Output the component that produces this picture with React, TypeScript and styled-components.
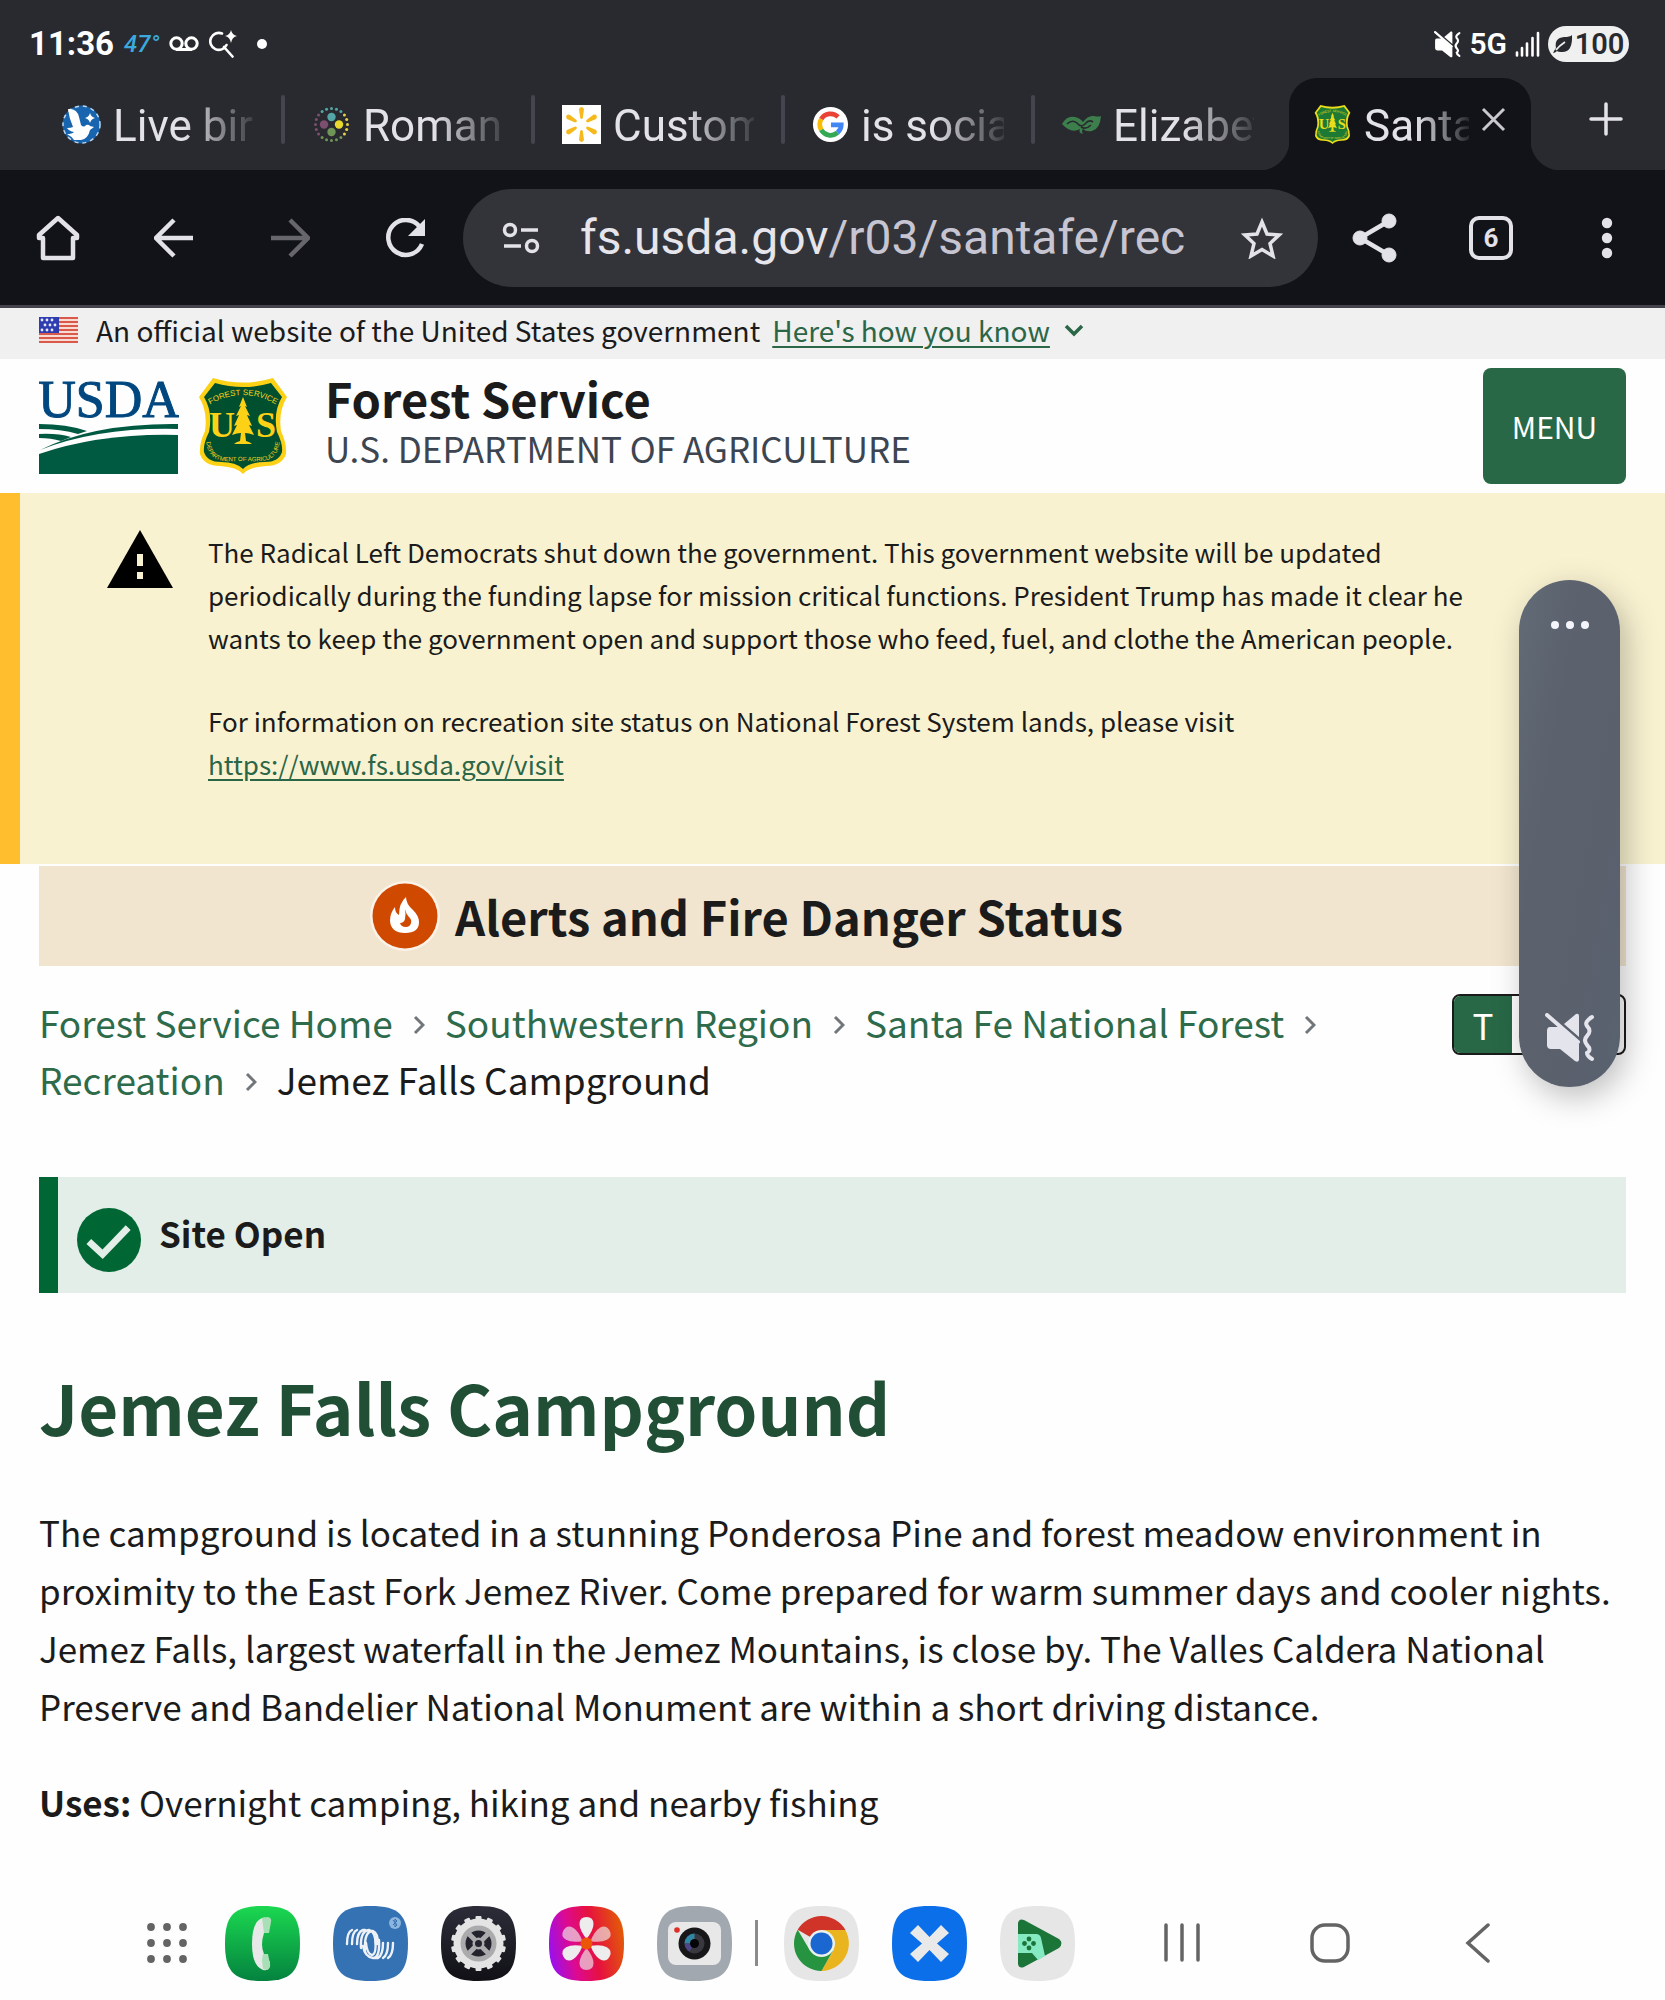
import React from "react";
import styled, { createGlobalStyle, css } from "styled-components";

const site = `"Noto Sans CJK JP", "Noto Sans", sans-serif`;
const system = `Roboto, "Liberation Sans", sans-serif`;

const ink = "#1b1b1b";
const forest = "#286846";
const darkBar = "#121318";
const strip = "#292a2f";
const light = "#e3e2e9";

const GlobalStyle = createGlobalStyle`
  *, *::before, *::after { box-sizing: border-box; }
  body { margin: 0; background: #fefefe; color: ${ink}; font-family: ${site}; }
  h1, h2, p, ol { margin: 0; padding: 0; }
  button { border: 0; padding: 0; background: none; color: inherit; font: inherit; cursor: pointer; }
  svg { display: block; flex: none; }
`;

const Screen = styled.div`
  position: relative;
  display: flex;
  flex-direction: column;
  min-height: 100vh;
`;

/* ---------- phone status bar ---------- */

const StatusBar = styled.div`
  display: flex;
  align-items: center;
  justify-content: space-between;
  height: 78px;
  padding: 10px 36px 0 29px;
  background: ${strip};
  color: #fff;
  font-family: ${system};
`;

const StatusGroup = styled.div<{ $gap: number }>`
  display: flex;
  align-items: center;
  gap: ${(p) => p.$gap}px;
`;

const Clock = styled.time`
  font-size: 33px;
  font-weight: 700;
  line-height: 40px;
`;

const Temperature = styled.span`
  color: #3ba9dd;
  font-size: 24px;
  font-weight: 500;
  font-style: italic;
  line-height: 40px;
`;

const Network = styled.span`
  font-size: 30px;
  font-weight: 600;
  line-height: 40px;
`;

const Dot = styled.span`
  width: 10px;
  height: 10px;
  margin-left: 10px;
  border-radius: 50%;
  background: #fff;
`;

const Battery = styled.span`
  display: flex;
  align-items: center;
  justify-content: center;
  gap: 2px;
  width: 81px;
  height: 36px;
  border-radius: 18px;
  background: #f0f0f0;
  color: #292a2f;
  font-size: 29px;
  font-weight: 600;
`;

/* ---------- browser tabs ---------- */

const TabStrip = styled.nav`
  display: flex;
  height: 92px;
  padding-left: 33px;
  background: ${strip};
  font-family: ${system};
`;

const Tab = styled.button<{ $active?: boolean; $divider?: boolean }>`
  position: relative;
  display: flex;
  align-items: center;
  gap: 12px;
  flex: none;
  width: 250px;
  height: 92px;
  padding: 0 29px 0 29px;
  color: ${light};
  text-align: left;

  ${(p) =>
    p.$divider &&
    css`
      &::after {
        content: "";
        position: absolute;
        top: 17px;
        right: -2px;
        width: 4px;
        height: 49px;
        border-radius: 2px;
        background: #45454f;
      }
    `}

  ${(p) =>
    p.$active &&
    css`
      width: 242px;
      margin-left: 6px;
      padding: 0 25px 0 24px;
      border-radius: 28px 28px 0 0;
      background: ${darkBar};

      &::before,
      &::after {
        content: "";
        position: absolute;
        bottom: 0;
        width: 30px;
        height: 30px;
      }
      &::before {
        left: -30px;
        background: radial-gradient(circle at 0 0, transparent 30px, ${darkBar} 31px);
      }
      &::after {
        right: -30px;
        background: radial-gradient(circle at 100% 0, transparent 30px, ${darkBar} 31px);
      }
    `}
`;

const TabTitle = styled.span`
  flex: 1;
  min-width: 0;
  overflow: hidden;
  font-size: 44px;
  line-height: 60px;
  padding-top: 3px;
  white-space: nowrap;
  mask-image: linear-gradient(to right, #000 50%, rgba(0, 0, 0, 0.1) 100%);
`;

const TabAction = styled.button`
  display: grid;
  place-items: center;
  flex: none;
  margin: 0 0 10px;
  color: ${light};
`;

const NewTab = styled(TabAction)`
  width: 60px;
  margin-left: auto;
  margin-right: 29px;
`;

/* ---------- browser toolbar ---------- */

const Toolbar = styled.div`
  display: flex;
  align-items: center;
  justify-content: space-between;
  gap: 33px;
  height: 138px;
  padding: 0 34px;
  border-bottom: 3px solid #44434b;
  background: ${darkBar};
  color: ${light};
  font-family: ${system};
`;

const IconGroup = styled.div<{ $gap: number }>`
  display: flex;
  align-items: center;
  gap: ${(p) => p.$gap}px;
`;

const IconButton = styled.button<{ $dim?: boolean }>`
  display: grid;
  place-items: center;
  width: 48px;
  height: 60px;
  opacity: ${(p) => (p.$dim ? 0.4 : 1)};
`;

const Omnibox = styled.div`
  display: flex;
  align-items: center;
  flex: 1;
  min-width: 0;
  gap: 40px;
  height: 98px;
  padding: 0 32px 0 39px;
  border-radius: 49px;
  background: #33343a;
`;

const Address = styled.button`
  flex: 1;
  min-width: 0;
  overflow: hidden;
  margin-right: 14px;
  color: #c6c5d1;
  font-size: 48px;
  line-height: 64px;
  text-align: left;
  white-space: nowrap;

  b {
    color: #e6e5ec;
    font-weight: 400;
  }
`;

/* ---------- site header ---------- */

const GovBanner = styled.div`
  display: flex;
  align-items: center;
  padding: 3px 39px 10px;
  background: #f0f0f0;
  font-size: 28px;
  line-height: 38px;
`;

const BannerText = styled.span`
  margin: 0 12px 0 18px;
`;

const TextLink = styled.a`
  color: #2b6647;
  text-decoration: underline;
  text-decoration-thickness: 2px;
  text-underline-offset: 4px;
`;

const BannerToggle = styled.button`
  display: flex;
  align-items: center;
  gap: 14px;
  color: #2b6647;

  span {
    text-decoration: underline;
    text-decoration-thickness: 2px;
    text-underline-offset: 4px;
  }
`;

const Header = styled.header`
  display: flex;
  align-items: center;
  min-height: 134px;
  padding: 0 39px;
`;

const Brand = styled.div`
  display: flex;
  align-items: center;
  gap: 20px;
  flex: 1;
`;

const BrandText = styled.div`
  padding: 0 0 6px 18px;
`;

const Agency = styled.div`
  font-size: 47px;
  font-weight: 700;
  line-height: 50px;
`;

const Department = styled.div`
  color: #3d4551;
  font-size: 35px;
  line-height: 50px;
`;

const MenuButton = styled.button`
  width: 143px;
  height: 116px;
  border-radius: 8px;
  background: ${forest};
  color: #fff;
  font-size: 30px;
`;

/* ---------- page body ---------- */

const Notice = styled.section`
  display: flex;
  gap: 35px;
  padding: 37px 160px 79px 87px;
  border-left: 20px solid #ffbe2e;
  background: #f9f2d1;
  font-size: 26px;
  line-height: 43px;

  p + p {
    margin-top: 40px;
  }
`;

const Main = styled.main`
  padding: 2px 39px 0;
`;

const FireStatus = styled.section`
  display: flex;
  align-items: center;
  justify-content: center;
  gap: 15px;
  height: 100px;
  padding-right: 172px;
  background: #f1e5cf;

  h2 {
    font-size: 47px;
    line-height: 60px;
  }
`;

const CrumbRow = styled.div`
  display: flex;
  align-items: flex-start;
  justify-content: space-between;
  margin-top: 28px;
`;

const Crumbs = styled.ol`
  display: flex;
  flex-wrap: wrap;
  flex: 1;
  max-width: 1320px;
  list-style: none;
  font-size: 37px;
  line-height: 57px;

  li {
    display: flex;
    align-items: center;
  }
  a {
    color: #2e6b4b;
    text-decoration: none;
  }
  svg {
    margin: 4px 20px 0 20px;
  }
`;

const Translate = styled.div`
  display: flex;
  width: 174px;
  height: 61px;
  overflow: hidden;
  border: 2px solid ${ink};
  border-radius: 8px;
`;

const TranslateButton = styled.button`
  width: 58px;
  background: ${forest};
  color: #fff;
  font-size: 35px;
  line-height: 54px;
`;

const SiteStatus = styled.section`
  display: flex;
  gap: 18px;
  margin-top: 69px;
  padding: 31px 20px 21px 19px;
  border-left: 19px solid #006633;
  background: #e3eee8;
  font-size: 35px;
  font-weight: 700;
  line-height: 50px;
`;

const Title = styled.h1`
  margin-top: 68px;
  color: #214f36;
  font-size: 69px;
  font-weight: 700;
  line-height: 90px;
`;

const Copy = styled.div`
  margin-top: 52px;
  font-size: 35px;
  line-height: 58px;

  p + p {
    margin-top: 38px;
  }
`;

/* ---------- floating volume panel ---------- */

const VolumePanel = styled.aside`
  position: absolute;
  top: 580px;
  right: 45px;
  display: flex;
  flex-direction: column;
  align-items: center;
  justify-content: space-between;
  width: 101px;
  height: 507px;
  padding: 34px 0 24px;
  border-radius: 51px;
  background: linear-gradient(100deg, #616b76 0%, #5b616d 35%, #5b606d 70%, #58626f 100%);
  box-shadow: 6px 10px 32px rgba(0, 0, 0, 0.26);
  color: #e3e4ec;
`;

/* ---------- dock ---------- */

const Dock = styled.footer`
  display: flex;
  align-items: center;
  justify-content: space-between;
  height: 114px;
  margin-top: auto;
  padding: 0 169px 0 147px;
`;

const DockApps = styled.div`
  display: flex;
  align-items: center;
  gap: 33px;
`;

const DockButton = styled.button`
  display: block;
`;

const Divider = styled.span`
  width: 3px;
  height: 46px;
  margin: 0 -7px 0 -10px;
  background: #8b8b8b;
`;

const NavKeys = styled.div`
  display: flex;
  align-items: center;
  gap: 110px;
`;

/* ---------- drawings ---------- */

const MuteIcon = ({ size }: { size: number }) => (
  <svg width={size} height={size} viewBox="0 0 50 50" fill="currentColor">
    <path d="M5 14H14L34 31V47q-1 3-4 1L15 36H6q-4 0-4-4V18q0-4 3-4z" />
    <path d="M19 11 31 1q3-1 3 2v21z" />
    <path d="M2 2 33 29" stroke="currentColor" strokeWidth="4" strokeLinecap="round" />
    <path d="M47 4q-8 5-5 9 5 5 0 10-4 4 0 9 5 5 0 8 0 3 5 6" fill="none" stroke="currentColor" strokeWidth="4" strokeLinecap="round" />
  </svg>
);

const VoicemailIcon = () => (
  <svg width="30" height="16" viewBox="0 0 30 16" fill="none" stroke="#fff" strokeWidth="3">
    <circle cx="7.500" cy="7.500" r="5.700" />
    <circle cx="22.500" cy="7.500" r="5.700" />
    <path d="M7 13.500h16" />
  </svg>
);

const SparkSearchIcon = () => (
  <svg width="28" height="28" viewBox="0 0 28 28" fill="none" stroke="#fff" strokeWidth="2.600">
    <path d="M13 3.500A8.500 8.500 0 1 0 17.500 15M15 17l8.500 9.500" strokeLinecap="round" />
    <path d="M22 0q1 5 6 6-5 1-6 7-1-6-6-7 5-1 6-6z" fill="#fff" stroke="none" />
  </svg>
);

const SignalIcon = () => (
  <svg width="25" height="26" viewBox="0 0 25 26" stroke="#fff" strokeWidth="2.600" strokeLinecap="round">
    <path d="M2 21.500v3M7 17v7.500M12 12.500v12M17.500 7v17.500M23 2v22.500" />
  </svg>
);

const LeafIcon = () => (
  <svg width="20" height="20" viewBox="0 0 20 20">
    <path d="M19 1Q20 19 8 18q-3 0-4-1-2 2-4 2 2-4 3-5Q1 4 11 3q6 0 8-2z" fill="#292a2f" />
    <path d="M3 16q3-4 9-8" stroke="#f0f0f0" strokeWidth="1.800" fill="none" />
  </svg>
);

const BirdIcon = () => (
  <svg width="39" height="39" viewBox="0 0 39 39">
    <circle cx="19.500" cy="19.500" r="19" fill="#1864ae" />
    <circle cx="19.500" cy="19.500" r="18.500" fill="none" stroke="#bcd6ee" strokeWidth="1.500" strokeDasharray="4 4" />
    <path d="M6 4q9-1 11 8l2 8q3 3 5 0 3-1 4 1l4 1-4 3q-2 9-9 10h-7q-3-4-7-6 5 0 7-2-5-1-7-4 4 0 6-1-4-9-5-18z" fill="#fff" />
    <path d="M28 8q1 4 5 5-4 1-5 5-1-4-5-5 4-1 5-5z" fill="#fff" />
  </svg>
);

const DotsIcon = () => (
  <svg width="39" height="39" viewBox="0 0 39 39">
    {Array.from({ length: 20 }, (_, i) => {
      const a = (i / 20) * Math.PI * 2 - Math.PI / 2;
      const color = i < 3 ? "#54a5a8" : i < 8 ? "#e4d246" : i < 13 ? "#6f9457" : i < 18 ? "#7c4e70" : "#54a5a8";
      return <circle key={i} cx={19.5 + 16 * Math.cos(a)} cy={19.5 + 16 * Math.sin(a)} r="1.500" fill={color} />;
    })}
    <circle cx="19.500" cy="12" r="4.200" fill="#54a5a8" />
    <circle cx="27" cy="19.500" r="4.200" fill="#e9d82e" />
    <circle cx="19.500" cy="27" r="4.200" fill="#6f9457" />
    <circle cx="12" cy="19.500" r="4.200" fill="#7c4e70" />
  </svg>
);

const SparkIcon = () => (
  <svg width="39" height="39" viewBox="0 0 39 39">
    <rect width="39" height="39" fill="#fff" />
    {[0, 60, 120, 180, 240, 300].map((a) => (
      <path key={a} d="M17 4q2.500-4 5 0l-1.200 9q-1.300 2-2.600 0z" fill="#f6b91c" transform={`rotate(${a} 19.500 19.500)`} />
    ))}
  </svg>
);

const GoogleIcon = () => (
  <svg width="37" height="39" viewBox="0 0 39 39" fill="none">
    <circle cx="19.500" cy="19.500" r="18.500" fill="#fff" />
    <g strokeWidth="5">
      <path d="M27.500 11.500A11.300 11.300 0 0 0 9.700 13.900" stroke="#ea4335" />
      <path d="M9.700 13.900a11.300 11.300 0 0 0 0 11.200" stroke="#fbbc05" />
      <path d="M9.700 25.100a11.300 11.300 0 0 0 17.200 3" stroke="#34a853" />
      <path d="M26.900 28.100a11.300 11.300 0 0 0 3.900-8.100H20" stroke="#4285f4" />
    </g>
  </svg>
);

const InfinityLeafIcon = () => (
  <svg width="39" height="39" viewBox="0 0 39 39">
    <path d="M0 19Q5 10 13 12q5 1 8 5 5-7 11-6 4 1 7 0-1 13-9 15-6 1-9-2-2 2 0 5-5-1-3-5-9 5-18-5z" fill="#3c7f4c" />
    <path d="M5 19q5-5 10-1 4 5 8 1 4-5 8-2M19 22q5 3 10-2" stroke="#292a2f" strokeWidth="1.600" fill="none" />
  </svg>
);

const ShieldIcon = ({ width, height, small }: { width: number; height: number; small?: boolean }) => {
  const yellow = small ? "#e9dc1a" : "#fcd116";
  const green = small ? "#1c7a34" : "#005030";
  const id = small ? "fs-small" : "fs-large";
  return (
    <svg width={width} height={height} viewBox="0 0 88 96" role="img" aria-label="Forest Service shield">
      <path
        d="M14 0Q44 9 74 0L88 19Q79 34 82 53 88 66 87 76 83 88 67 88 50 89 44 96 38 89 21 88 5 88 1 76 0 66 6 53 9 34 0 19z"
        fill={yellow}
      />
      <path
        d="M16 5Q44 13 72 5L83 19Q74 34 78 54 84 66 83 74 80 84 66 84 51 84 44 91 37 84 22 84 8 84 5 74 4 66 10 54 14 34 5 19z"
        fill={green}
      />
      <path id={`${id}-top`} d="M10 27Q44 7 78 27" fill="none" />
      <path id={`${id}-bottom`} d="M7 58C7 88 28 83 44 83S81 88 81 58" fill="none" />
      <g fill={yellow} fontFamily="Liberation Sans, sans-serif" textAnchor="middle">
        <text fontSize="8"><textPath href={`#${id}-top`} startOffset="50%">FOREST SERVICE</textPath></text>
        <text fontSize="6"><textPath href={`#${id}-bottom`} startOffset="50%">DEPARTMENT OF AGRICULTURE</textPath></text>
      </g>
      <g fill={yellow} fontFamily="Liberation Serif, serif" fontWeight="700" fontSize="36" textAnchor="middle">
        <text x="23" y="59">U</text>
        <text x="67" y="59">S</text>
      </g>
      <path
        d="M44 19l4 10-2-1 5 10-3-1 5 11-3-1 5 10q-5-2-9-2l1 8q4 1 6 3H35q2-2 6-3l1-8q-4 0-9 2l5-10-3 1 5-11-3 1 5-10-2 1z"
        fill={yellow}
      />
    </svg>
  );
};

const CloseIcon = () => (
  <svg width="25" height="25" viewBox="0 0 25 25" stroke="#c9c8cf" strokeWidth="3">
    <path d="M2 2l21 21M23 2 2 23" />
  </svg>
);

const PlusIcon = () => (
  <svg width="34" height="34" viewBox="0 0 34 34" stroke="currentColor" strokeWidth="3.500" strokeLinecap="round">
    <path d="M17 2v30M2 17h30" />
  </svg>
);

const HomeIcon = () => (
  <svg width="44" height="46" viewBox="0 0 44 46" fill="none" stroke="currentColor" strokeWidth="4.500" strokeLinejoin="round">
    <path d="M22 3 3 20v3h4v20h30V23h4v-3z" />
  </svg>
);

const ArrowIcon = ({ forward }: { forward?: boolean }) => (
  <svg width="40" height="40" viewBox="0 0 40 40" fill="none" stroke="currentColor" strokeWidth="4.500">
    <path d={forward ? "M1 20h36M20 2l18 18-18 18" : "M39 20H3M20 2 2 20l18 18"} />
  </svg>
);

const ReloadIcon = () => (
  <svg width="40" height="40" viewBox="0 0 40 40" fill="none" stroke="currentColor" strokeWidth="4.500">
    <path d="M33.500 8.500A17.500 17.500 0 1 0 36 26" />
    <path d="M39 1v17H22z" fill="currentColor" stroke="none" />
  </svg>
);

const TuneIcon = () => (
  <svg width="38" height="32" viewBox="0 0 38 32" fill="none" stroke="currentColor" strokeWidth="3.500">
    <circle cx="8" cy="8" r="5.500" />
    <circle cx="30" cy="24" r="5.500" />
    <path d="M19 8h17M2 24h17" />
  </svg>
);

const StarIcon = () => (
  <svg width="42" height="42" viewBox="0 0 42 42" fill="none" stroke="currentColor" strokeWidth="3.500">
    <path d="M21 5l5 12 12 1-9 8.500 3 12.500-11-6.500L10 39l3-12.500L4 18l12-1z" />
  </svg>
);

const ShareIcon = () => (
  <svg width="46" height="50" viewBox="0 0 46 50" fill="currentColor" stroke="currentColor">
    <path d="M37 8 8 25l29 17" fill="none" strokeWidth="4.500" />
    <circle cx="37" cy="8" r="7" />
    <circle cx="8" cy="25" r="7" />
    <circle cx="37" cy="42" r="7" />
  </svg>
);

const TabCount = styled.span`
  display: grid;
  place-items: center;
  width: 44px;
  height: 44px;
  border: 4px solid currentColor;
  border-radius: 10px;
  font-size: 26px;
  font-weight: 700;
  line-height: 30px;
`;

const MoreIcon = () => (
  <svg width="12" height="42" viewBox="0 0 12 42" fill="currentColor">
    <circle cx="6" cy="6" r="5.200" />
    <circle cx="6" cy="21" r="5.200" />
    <circle cx="6" cy="36" r="5.200" />
  </svg>
);

const FlagIcon = () => (
  <svg width="39" height="26" viewBox="0 0 39 26" role="img" aria-label="U.S. flag">
    <rect width="39" height="26" fill="#f8dcd3" />
    {[0, 4, 8, 12, 16, 20, 24].map((y) => (
      <rect key={y} y={y} width="39" height="2" fill="#d9594a" />
    ))}
    <rect width="20" height="16" fill="#2f3db0" />
    {[3, 8, 13].map((y, row) =>
      [3, 8, 13].map((x) => <circle key={`${x}-${y}`} cx={x + (row % 2) * 3} cy={y} r="1.400" fill="#e6e8ff" />)
    )}
  </svg>
);

const ChevronDown = () => (
  <svg width="20" height="13" viewBox="0 0 20 13" fill="none" stroke="currentColor" strokeWidth="3.500">
    <path d="M2 2l8 8 8-8" />
  </svg>
);

const ChevronRight = () => (
  <svg width="12" height="20" viewBox="0 0 12 20" fill="none" stroke="#71767a" strokeWidth="3">
    <path d="M2 2l8 8-8 8" />
  </svg>
);

const UsdaLogo = () => (
  <svg width="140" height="98" viewBox="0 0 140 98" role="img" aria-label="USDA">
    <text x="70" y="40" textAnchor="middle" fontFamily="Liberation Serif, serif" fontSize="52" fill="#00477f" stroke="#00477f" strokeWidth="1">
      USDA
    </text>
    <g fill="#005941">
      <path d="M0 47q28 0 48 7l-9 3Q22 52 0 52z" />
      <path d="M0 57q18-1 32 3l-10 4Q12 61 0 61z" />
      <path d="M1 73Q55 46 139 47v5Q60 50 1 73z" />
      <path d="M0 77Q62 56 139 58v39H0z" />
    </g>
  </svg>
);

const WarningIcon = () => (
  <svg width="66" height="58" viewBox="0 0 66 58">
    <path d="M33 0l33 58H0z" />
    <path d="M30 24h6v12h-6zM30 42h6v7h-6z" fill="#f9f2d1" />
  </svg>
);

const FlameIcon = () => (
  <svg width="70" height="70" viewBox="0 0 70 70">
    <circle cx="35" cy="35" r="35" fill="#fbf3e8" />
    <circle cx="35" cy="35" r="32.500" fill="#cf4900" />
    <path d="M36 16q0 7 7 13 6 6 6 12 0 11-14 11T20 40q0-8 5-14 0 6 4 8 0-12 7-18z" fill="#fff" />
    <path d="M35 28q1 5 4 8t2 6q-1 4-5 4-5 0-6-4 4 0 5-4 1-5 0-10z" fill="#cf4900" />
  </svg>
);

const CheckIcon = () => (
  <svg width="64" height="64" viewBox="0 0 65 65">
    <circle cx="32.500" cy="32.500" r="32.500" fill="#006633" />
    <path d="M12 34l14 13 26-27" fill="none" stroke="#e3eee8" strokeWidth="7" />
  </svg>
);

const squircle = "M37.5 0C66 0 75 9 75 37.5S66 75 37.5 75 0 66 0 37.500 9 0 37.500 0z";

const AppTile = ({ fill, children }: { fill: string; children: React.ReactNode }) => (
  <svg width="75" height="75" viewBox="0 0 75 75">
    <path d={squircle} fill={fill} />
    {children}
  </svg>
);

const PhoneApp = () => (
  <AppTile fill="url(#phone-bg)">
    <defs>
      <linearGradient id="phone-bg" x2="0" y2="1">
        <stop stopColor="#1bd850" />
        <stop offset="1" stopColor="#04823f" />
      </linearGradient>
    </defs>
    <path d="M37 12Q27 16 27 38t11 26q5 1 6-3l1-5-6-8q-4-9 0-21l5-8-2-7q-3-1-5 0z" fill="#e6e9e7" />
    <path d="M37 12l6-1q4 1 3 5l-2 11h-5zM38 48h5l2 10q1 4-3 6l-4-1-1-9z" fill="#a8dfb6" />
  </AppTile>
);

const BlueApp = () => (
  <AppTile fill="#3572b3">
    <circle cx="62" cy="17" r="6" fill="#8db5de" />
    <path d="M60 14l4 5-2 2v-8l2 2-4 4" stroke="#3572b3" strokeWidth="1" fill="none" />
    <g fill="none" stroke="#eef2f7" strokeWidth="2.400" strokeLinecap="round">
      <path d="M14 38q0-12 5-14M19 38q0-12 5-14M24 38q0-12 6-14h2M28 42q-1-17 8-18 6 1 7 14M32 44q-1-19 8-19 5 2 5 13" />
      <path d="M60 37q0 12-5 15M55 37q0 12-5 15M50 37q0 12-5 15h-3M46 34q1 18-6 18-8-1-10-12M42 31q2 17-3 18-5-1-6-12" />
    </g>
  </AppTile>
);

const SettingsApp = () => (
  <AppTile fill="url(#gear-bg)">
    <defs>
      <linearGradient id="gear-bg" x2="0" y2="1">
        <stop stopColor="#2d2d3a" />
        <stop offset="1" stopColor="#101015" />
      </linearGradient>
    </defs>
    <circle cx="37.500" cy="37.500" r="25" fill="#e4e4e4" />
    {Array.from({ length: 14 }, (_, i) => (
      <rect key={i} x="34.500" y="10" width="6" height="9" rx="1" fill="#e4e4e4" transform={`rotate(${(i * 360) / 14} 37.500 37.500)`} />
    ))}
    <circle cx="37.500" cy="37.500" r="18" fill="#ababad" />
    <circle cx="37.500" cy="37.500" r="13" fill="#23232d" />
    <path d="M28 28l19 19M47 28 28 47" stroke="#ababad" strokeWidth="5" />
    <circle cx="37.500" cy="37.500" r="6" fill="#ababad" />
    <circle cx="37.500" cy="37.500" r="3.500" fill="#23232d" />
  </AppTile>
);

const GalleryApp = () => (
  <AppTile fill="url(#gallery-bg)">
    <defs>
      <linearGradient id="gallery-bg" y1="0.600" x2="1" y2="0.400">
        <stop stopColor="#9a10ee" />
        <stop offset="0.300" stopColor="#dd0a90" />
        <stop offset="0.600" stopColor="#e6113f" />
        <stop offset="1" stopColor="#e25a08" />
      </linearGradient>
    </defs>
    {[0, 60, 120, 180, 240, 300].map((a) => (
      <path
        key={a}
        d="M37.500 33q-7-9-7-15 0-7 7-7t7 7q0 6-7 15z"
        fill="#ededed"
        fillOpacity={a === 60 || a === 180 || a === 300 ? 0.65 : 1}
        transform={`rotate(${a} 37.500 37.500)`}
      />
    ))}
    <circle cx="37.500" cy="37.500" r="6" fill="#ea5506" />
  </AppTile>
);

const CameraApp = () => (
  <AppTile fill="#a1a8af">
    <rect x="11" y="16" width="53" height="43" rx="8" fill="#e8e8e8" />
    <circle cx="20" cy="24" r="2.800" fill="#e02f26" />
    <circle cx="37.500" cy="37.500" r="16" fill="#17171a" />
    <circle cx="37.500" cy="37.500" r="10" fill="#38383e" />
    <path d="M37.500 27.500v6a4 4 0 0 0-4 4h-6a10 10 0 0 1 10-10z" fill="#2f87a5" />
    <path d="M27.500 37.500a10 10 0 0 0 5 8l3-5q-2-1-2-3z" fill="#4d4686" />
    <circle cx="37.500" cy="37.500" r="4.500" fill="#050507" />
  </AppTile>
);

const ChromeApp = () => (
  <AppTile fill="#e6e6e6">
    <path d="M37.500 37.500 13.700 23.700A27.500 27.500 0 0 1 61.300 23.700L61.300 24H37.500z" fill="#d03327" />
    <path d="M37.500 24h23.800A27.500 27.500 0 0 1 37.500 65l12-20.700z" fill="#e9b41e" />
    <path d="M13.700 23.700 25.800 44.300 49.200 44.300 37.500 65A27.500 27.500 0 0 1 13.700 23.700z" fill="#25933f" />
    <circle cx="37.500" cy="37.500" r="13.500" fill="#eaf0ee" />
    <circle cx="37.500" cy="37.500" r="11" fill="#1a67d2" />
  </AppTile>
);

const CrossApp = () => (
  <AppTile fill="#0a6fe8">
    <path d="M18 27l8-8 11.500 12L49 19l8 8-12 10.500L57 48l-8 8-11.500-12L26 56l-8-8 12-10.500z" fill="#e9e9e9" />
  </AppTile>
);

const PlayGamesApp = () => (
  <AppTile fill="#e6e6e6">
    <path d="M18 17q1-5 6-3l35 19q5 4 0 9L24 61q-5 2-6-3z" fill="#1b7438" />
    <path d="M18 28h18q4 0 5 4l4 18-7 4-6-7H18z" fill="#85e9c2" />
    <g fill="#1b7438">
      <circle cx="29" cy="33" r="2.400" />
      <circle cx="24.500" cy="37.500" r="2.400" />
      <circle cx="33.500" cy="37.500" r="2.400" />
      <circle cx="29" cy="42" r="2.400" />
    </g>
  </AppTile>
);

const AppsGridIcon = () => (
  <svg width="45" height="40" viewBox="0 0 45 40" fill="#646464">
    {[4, 20, 36].map((y) => [4, 20, 36].map((x) => <circle key={`${x}-${y}`} cx={x} cy={y} r="3.900" />))}
  </svg>
);

const dockLeft = [
  { name: "Phone", Icon: PhoneApp },
  { name: "Connect", Icon: BlueApp },
  { name: "Settings", Icon: SettingsApp },
  { name: "Gallery", Icon: GalleryApp },
  { name: "Camera", Icon: CameraApp },
];

const dockRight = [
  { name: "Chrome", Icon: ChromeApp },
  { name: "Tools", Icon: CrossApp },
  { name: "Play Games", Icon: PlayGamesApp },
];

const tabs = [
  { title: "Live birds", icon: <BirdIcon />, divider: true },
  { title: "Roman", icon: <DotsIcon />, divider: true },
  { title: "Customer", icon: <SparkIcon />, divider: true },
  { title: "is social", icon: <GoogleIcon />, divider: true },
  { title: "Elizabeth", icon: <InfinityLeafIcon />, divider: false },
];

const crumbs = ["Forest Service Home", "Southwestern Region", "Santa Fe National Forest", "Recreation"];

export default function App() {
  return (
    <Screen>
      <GlobalStyle />

      <StatusBar>
        <StatusGroup $gap={10}>
          <Clock>11:36</Clock>
          <Temperature>47°</Temperature>
          <VoicemailIcon />
          <SparkSearchIcon />
          <Dot />
        </StatusGroup>
        <StatusGroup $gap={8}>
          <MuteIcon size={27} />
          <Network>5G</Network>
          <SignalIcon />
          <Battery>
            <LeafIcon />
            100
          </Battery>
        </StatusGroup>
      </StatusBar>

      <TabStrip aria-label="Open tabs">
        {tabs.map((t) => (
          <Tab key={t.title} $divider={t.divider}>
            {t.icon}
            <TabTitle>{t.title}</TabTitle>
          </Tab>
        ))}
        <Tab as="div" $active>
          <ShieldIcon width={39} height={39} small />
          <TabTitle>Santa Fe</TabTitle>
          <TabAction aria-label="Close tab">
            <CloseIcon />
          </TabAction>
        </Tab>
        <NewTab aria-label="New tab">
          <PlusIcon />
        </NewTab>
      </TabStrip>

      <Toolbar>
        <IconGroup $gap={68}>
          <IconButton aria-label="Home"><HomeIcon /></IconButton>
          <IconButton aria-label="Back"><ArrowIcon /></IconButton>
          <IconButton aria-label="Forward" $dim><ArrowIcon forward /></IconButton>
          <IconButton aria-label="Reload"><ReloadIcon /></IconButton>
        </IconGroup>
        <Omnibox>
          <TuneIcon />
          <Address>
            <b>fs.usda.gov</b>/r03/santafe/recreation
          </Address>
          <IconButton aria-label="Bookmark"><StarIcon /></IconButton>
        </Omnibox>
        <IconGroup $gap={68}>
          <IconButton aria-label="Share"><ShareIcon /></IconButton>
          <IconButton aria-label="Six open tabs"><TabCount>6</TabCount></IconButton>
          <IconButton aria-label="More"><MoreIcon /></IconButton>
        </IconGroup>
      </Toolbar>

      <GovBanner>
        <FlagIcon />
        <BannerText>An official website of the United States government</BannerText>
        <BannerToggle>
          <span>Here's how you know</span>
          <ChevronDown />
        </BannerToggle>
      </GovBanner>

      <Header>
        <Brand>
          <UsdaLogo />
          <ShieldIcon width={88} height={96} />
          <BrandText>
            <Agency>Forest Service</Agency>
            <Department>U.S. DEPARTMENT OF AGRICULTURE</Department>
          </BrandText>
        </Brand>
        <MenuButton>MENU</MenuButton>
      </Header>

      <Notice>
        <WarningIcon />
        <div>
          <p>
            The Radical Left Democrats shut down the government. This government website will be updated periodically
            during the funding lapse for mission critical functions. President Trump has made it clear he wants to keep
            the government open and support those who feed, fuel, and clothe the American people.
          </p>
          <p>
            For information on recreation site status on National Forest System lands, please visit{" "}
            <TextLink href="#visit">https://www.fs.usda.gov/visit</TextLink>
          </p>
        </div>
      </Notice>

      <Main>
        <FireStatus>
          <FlameIcon />
          <h2>Alerts and Fire Danger Status</h2>
        </FireStatus>

        <CrumbRow>
          <Crumbs>
            {crumbs.map((c) => (
              <li key={c}>
                <a href="#crumb">{c}</a>
                <ChevronRight />
              </li>
            ))}
            <li aria-current="page">Jemez Falls Campground</li>
          </Crumbs>
          <Translate>
            <TranslateButton aria-label="Translate">T</TranslateButton>
          </Translate>
        </CrumbRow>

        <SiteStatus>
          <CheckIcon />
          Site Open
        </SiteStatus>

        <Title>Jemez Falls Campground</Title>

        <Copy>
          <p>
            The campground is located in a stunning Ponderosa Pine and forest meadow environment in proximity to the
            East Fork Jemez River. Come prepared for warm summer days and cooler nights. Jemez Falls, largest waterfall
            in the Jemez Mountains, is close by. The Valles Caldera National Preserve and Bandelier National Monument
            are within a short driving distance.
          </p>
          <p>
            <b>Uses:</b> Overnight camping, hiking and nearby fishing
          </p>
        </Copy>
      </Main>

      <VolumePanel aria-label="Volume">
        <svg width="38" height="24" viewBox="0 0 38 24" fill="#f4f5fa">
          <circle cx="4" cy="11" r="4" />
          <circle cx="19" cy="11" r="4" />
          <circle cx="34" cy="11" r="4" />
        </svg>
        <MuteIcon size={50} />
      </VolumePanel>

      <Dock>
        <DockApps>
          <DockButton aria-label="All apps"><AppsGridIcon /></DockButton>
          {dockLeft.map(({ name, Icon }) => (
            <DockButton key={name} aria-label={name}><Icon /></DockButton>
          ))}
          <Divider />
          {dockRight.map(({ name, Icon }) => (
            <DockButton key={name} aria-label={name}><Icon /></DockButton>
          ))}
        </DockApps>
        <NavKeys>
          <DockButton aria-label="Recent apps">
            <svg width="36" height="40" viewBox="0 0 36 40" stroke="#646464" strokeWidth="3.500" strokeLinecap="round">
              <path d="M2 2v35M18 2v35M34 2v35" />
            </svg>
          </DockButton>
          <DockButton aria-label="Home screen">
            <svg width="40" height="40" viewBox="0 0 40 40" fill="none" stroke="#646464" strokeWidth="3.500">
              <rect x="2" y="2" width="36" height="36" rx="13" />
            </svg>
          </DockButton>
          <DockButton aria-label="Back">
            <svg width="36" height="40" viewBox="0 0 36 40" fill="none" stroke="#646464" strokeWidth="3.500" strokeLinecap="round">
              <path d="M28 2 8 20l20 18" />
            </svg>
          </DockButton>
        </NavKeys>
      </Dock>
    </Screen>
  );
}
